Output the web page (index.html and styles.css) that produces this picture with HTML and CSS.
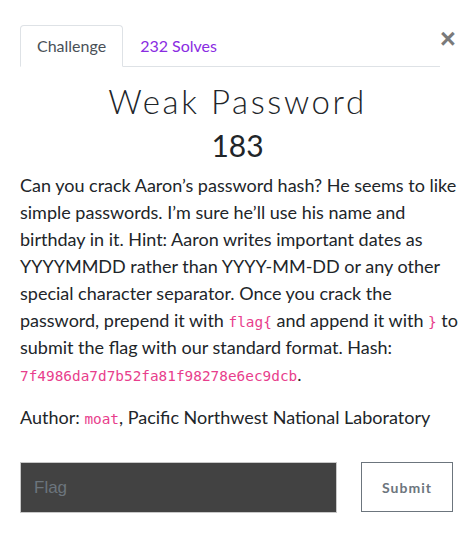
FILE: index.html
```html
<!DOCTYPE html>
<html>
<head>
<meta charset="utf-8">
<link rel="stylesheet" href="styles.css">
</head>
<body>
<div class="modal">
  <div class="head">
    <ul class="tabs">
      <li class="tab active">Challenge</li>
      <li class="tab link">232 Solves</li>
    </ul>
    <button class="close" aria-label="Close">&times;</button>
  </div>
  <h2 class="title">Weak Password</h2>
  <h3 class="value">183</h3>
  <div class="desc">
    <p>Can you crack Aaron’s password hash? He seems to like simple passwords. I’m sure he’ll use his name and birthday in it. Hint: Aaron writes important dates as YYYYMMDD rather than YYYY-MM-DD or any other special character separator. Once you crack the password, prepend it with <code>flag{</code> and append it with <code>}</code> to submit the flag with our standard format. Hash: <code>7f4986da7d7b52fa81f98278e6ec9dcb</code>.</p>
    <p>Author: <code>moat</code>, Pacific Northwest National Laboratory</p>
  </div>
  <form class="submit-row">
    <input class="flag" type="text" placeholder="Flag">
    <button class="submit" type="button">Submit</button>
  </form>
</div>
</body>
</html>
```
FILE: styles.css
```css
* { box-sizing: border-box; }
body {
  margin: 0;
  background: #fff;
  font-family: Lato, "Liberation Sans", sans-serif;
  color: #212529;
}
.modal {
  width: 475px;
  padding: 25px 14px 0 20px;
}
.head {
  display: flex;
  align-items: flex-start;
  width: 435px;
}
.tabs {
  list-style: none;
  margin: 0;
  padding: 0;
  display: flex;
  flex: 1;
  border-bottom: 1px solid #dee2e6;
}
.tab {
  font-size: 16px;
  line-height: 24px;
  padding: 8px 16px;
  margin-bottom: -1px;
  border: 1px solid transparent;
  border-radius: 4px 4px 0 0;
}
.tab.active {
  color: #495057;
  border-color: #dee2e6 #dee2e6 #fff;
  background: #fff;
}
.tab.link { color: #8a2be2; }
.close {
  width: 15px;
  padding: 0;
  border: 0;
  background: none;
  font-family: "Liberation Sans", sans-serif;
  font-size: 27px;
  font-weight: bold;
  line-height: 22px;
  color: #7a7a7a;
  text-align: right;
  margin-top: 3px;
}
.title {
  margin: 15px 0 0;
  width: 435px;
  text-align: center;
  font-family: Lato, sans-serif;
  font-weight: 300;
  font-size: 33px;
  line-height: 38px;
  letter-spacing: 2.6px;
  color: #212529;
}
.value {
  margin: 8px 0 0;
  width: 435px;
  text-align: center;
  font-weight: 400;
  font-size: 30px;
  line-height: 34px;
  font-family: Lato, sans-serif;
}
.desc { margin-top: 10px; }
.desc p {
  margin: 0 0 16px;
  font-size: 18px;
  line-height: 27px;
}
code {
  font-family: "DejaVu Sans Mono", monospace;
  font-size: 14.4px;
  line-height: 1;
  color: #e83e8c;
}
.submit-row {
  display: flex;
  gap: 24px;
  margin-top: 31px;
}
.flag {
  width: 317px;
  height: 51px;
  background: #424242;
  border: 1px solid #c8c8c8;
  padding: 0 13px;
  font-family: "Liberation Sans", sans-serif;
  font-size: 17px;
  color: #fff;
  outline: none;
}
.flag::placeholder { color: #6c757d; }
.submit {
  width: 92px;
  height: 50px;
  background: #fff;
  border: 1px solid #6c757d;
  font-family: Lato, sans-serif;
  font-weight: bold;
  font-size: 14px;
  letter-spacing: 1px;
  color: #6c757d;
}
```
